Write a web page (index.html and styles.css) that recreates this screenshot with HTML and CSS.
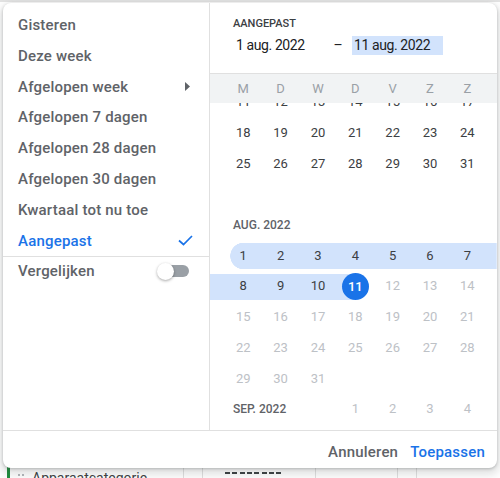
FILE: index.html
```html
<!DOCTYPE html>
<html lang="nl">

<head>
    <meta charset="UTF-8">
    <meta name="viewport" content="width=device-width, initial-scale=1.0">
    <title>Datumbereik</title>
    <link rel="stylesheet" href="styles.css">
</head>

<body>
    <!-- Pagina achter de popup -->
    <div class="page">
        <div class="page-top"></div>
        <div class="table-row">
            <div class="dim-cell">
                <span class="row-mark"></span>
                <svg class="drag" width="6" height="10" viewBox="0 0 6 10">
                    <circle cx="1" cy="2" r="1" fill="#9aa0a6" />
                    <circle cx="5" cy="2" r="1" fill="#9aa0a6" />
                    <circle cx="1" cy="6" r="1" fill="#9aa0a6" />
                    <circle cx="5" cy="6" r="1" fill="#9aa0a6" />
                </svg>
                <span class="dim-name">Apparaatcategorie</span>
            </div>
            <div class="cell cell-a"></div>
            <div class="cell cell-b"><span class="dashes"></span></div>
            <div class="cell cell-c"></div>
            <div class="cell cell-d"></div>
            <div class="cell cell-e"></div>
        </div>
    </div>

    <!-- Datumkiezer -->
    <div class="picker">
        <ul class="presets">
            <li class="preset">Gisteren</li>
            <li class="preset">Deze week</li>
            <li class="preset">Afgelopen week
                <svg class="arrow" width="5" height="9" viewBox="0 0 5 9">
                    <path d="M0 0 L5 4.5 L0 9 Z" fill="#5f6368" />
                </svg>
            </li>
            <li class="preset">Afgelopen 7 dagen</li>
            <li class="preset">Afgelopen 28 dagen</li>
            <li class="preset">Afgelopen 30 dagen</li>
            <li class="preset">Kwartaal tot nu toe</li>
            <li class="preset active">Aangepast
                <svg class="check" width="15" height="11" viewBox="0 0 15 11">
                    <path d="M1 5.5 L5.5 9.5 L14 1" fill="none" stroke="#1a73e8" stroke-width="1.7" />
                </svg>
            </li>
            <li class="preset compare">Vergelijken
                <span class="switch"><span class="thumb"></span></span>
            </li>
        </ul>

        <div class="calendar">
            <div class="cal-head">
                <div class="cal-title">AANGEPAST</div>
                <div class="range-inputs">
                    <span class="date-field">1 aug. 2022</span>
                    <span class="range-sep">–</span>
                    <span class="date-field focused">11 aug. 2022</span>
                </div>
            </div>

            <div class="weekdays">
                <span>M</span><span>D</span><span>W</span><span>D</span><span>V</span><span>Z</span><span>Z</span>
            </div>

            <div class="months">
                <div class="months-inner">
                    <div class="week">
                        <span>11</span><span>12</span><span>13</span><span>14</span><span>15</span><span>16</span><span>17</span>
                    </div>
                    <div class="week">
                        <span>18</span><span>19</span><span>20</span><span>21</span><span>22</span><span>23</span><span>24</span>
                    </div>
                    <div class="week">
                        <span>25</span><span>26</span><span>27</span><span>28</span><span>29</span><span>30</span><span>31</span>
                    </div>
                    <div class="week-gap"></div>

                    <div class="month-label">AUG. 2022</div>
                    <div class="week range-start">
                        <span class="start">1</span><span>2</span><span>3</span><span>4</span><span>5</span><span>6</span><span>7</span>
                    </div>
                    <div class="week range-end">
                        <span>8</span><span>9</span><span>10</span><span class="end"><b>11</b></span><span class="off">12</span><span class="off">13</span><span class="off">14</span>
                    </div>
                    <div class="week off">
                        <span>15</span><span>16</span><span>17</span><span>18</span><span>19</span><span>20</span><span>21</span>
                    </div>
                    <div class="week off">
                        <span>22</span><span>23</span><span>24</span><span>25</span><span>26</span><span>27</span><span>28</span>
                    </div>
                    <div class="week off">
                        <span>29</span><span>30</span><span>31</span>
                    </div>
                    <div class="week off">
                        <span class="month-inline">SEP. 2022</span><span>1</span><span>2</span><span>3</span><span>4</span>
                    </div>
                </div>
            </div>
        </div>

        <div class="actions">
            <span class="btn">Annuleren</span>
            <span class="btn primary">Toepassen</span>
        </div>
    </div>
</body>

</html>
```

FILE: styles.css
```css
body {
    margin: 0;
    font-family: Roboto, "Liberation Sans", Arial, sans-serif;
    background-color: #fff;
    overflow: hidden;
}

/* pagina achter de popup */
.page {
    height: 490px;
    display: flex;
    flex-direction: column;
    justify-content: space-between;
}

.page-top {
    height: 2px;
    background-color: #e3e3e3;
}

.table-row {
    height: 25px;
    display: flex;
    font-size: 14px;
    line-height: 20px;
    color: #3c4043;
}

.dim-cell {
    width: 183px;
    display: flex;
    align-items: center;
    align-self: stretch;
}

.row-mark {
    width: 3px;
    align-self: stretch;
    margin-left: 7px;
    background-color: #1e8e3e;
}

.drag {
    margin-left: 8px;
}

.dim-name {
    margin-left: 8px;
}

.cell {
    border-left: 1px solid #e0e0e0;
}

.cell-a {
    width: 18px;
}

.cell-b {
    width: 112px;
}

.cell-c {
    width: 81px;
}

.cell-d {
    width: 18px;
}

.cell-e {
    flex: 1;
}

.dashes {
    display: block;
    width: 57px;
    height: 2px;
    margin: 7px 0 0 22px;
    background: repeating-linear-gradient(90deg, #3c4043 0 5px, transparent 5px 7.3px);
}

/* popup */
.picker {
    position: absolute;
    top: 3px;
    left: 3px;
    width: 494px;
    height: 465px;
    background-color: #fff;
    border-radius: 8px;
    box-shadow: 0 1px 3px rgba(60, 64, 67, 0.3), 0 4px 8px 3px rgba(60, 64, 67, 0.15);
    display: grid;
    grid-template-columns: 206px 1fr;
    grid-template-rows: 427px 1fr;
    overflow: hidden;
}

.presets {
    list-style: none;
    margin: 0;
    padding: 6.6px 0 0;
}

.preset {
    height: 30.8px;
    display: flex;
    align-items: center;
    justify-content: space-between;
    padding: 0 16px 0 15px;
    font-size: 15px;
    font-weight: 500;
    letter-spacing: 0.2px;
    color: #5f6368;
}

.preset.active {
    color: #1a73e8;
}

.preset.compare {
    height: 29px;
    border-top: 1px solid #e0e0e0;
}

.arrow {
    margin-right: 3px;
}

.switch {
    width: 30px;
    height: 12px;
    margin-right: 4px;
    border-radius: 6px;
    background-color: #9aa0a6;
    display: flex;
    align-items: center;
}

.thumb {
    width: 17px;
    height: 17px;
    margin-left: -2px;
    border-radius: 50%;
    background-color: #fff;
    box-shadow: 0 1px 3px rgba(0, 0, 0, 0.35);
}

.calendar {
    border-left: 1px solid #e0e0e0;
    display: flex;
    flex-direction: column;
    min-height: 0;
}

.cal-head {
    height: 70px;
    box-sizing: border-box;
    padding: 13px 0 0 23px;
}

.cal-title {
    font-size: 11px;
    font-weight: 500;
    line-height: 16px;
    color: #3c4043;
}

.range-inputs {
    display: grid;
    grid-template-columns: 91px 28px 91px;
    margin-top: 4px;
    font-size: 14px;
    line-height: 19px;
    letter-spacing: -0.4px;
    color: #202124;
}

.date-field {
    padding-left: 3px;
}

.date-field.focused {
    padding-left: 2px;
    background-color: #d2e3fc;
}

.range-sep {
    text-align: center;
}

.weekdays {
    position: relative;
    z-index: 1;
    height: 29px;
    display: grid;
    grid-template-columns: repeat(7, 37.35px);
    align-items: center;
    padding-left: 14.6px;
    border-top: 1px solid #e0e0e0;
    background-color: #f1f3f4;
    font-size: 13px;
    color: #9aa0a6;
    text-align: center;
}

.months {
    flex: 1;
    overflow: hidden;
}

.months-inner {
    margin-top: -15.7px;
}

.week {
    height: 30.7px;
    display: grid;
    grid-template-columns: repeat(7, 37.35px);
    align-items: center;
    padding: 0 11px 0 14.6px;
    font-size: 13px;
    color: #3c4043;
    text-align: center;
}

.week > span {
    height: 30.7px;
    line-height: 30.7px;
}

.week-gap {
    height: 30.7px;
}

.month-label {
    height: 30.7px;
    line-height: 30.7px;
    padding-left: 23px;
    font-size: 12px;
    font-weight: 500;
    color: #5f6368;
}

.week .month-inline {
    grid-column: span 3;
    padding-left: 8.4px;
    text-align: left;
    font-size: 12px;
    font-weight: 500;
    color: #5f6368;
}

.off,
.week.off {
    color: #bdc1c6;
}

/* geselecteerd bereik */
.range-start {
    background: linear-gradient(#d2e3fc, #d2e3fc) right center / calc(100% - 33.3px) 26px no-repeat;
}

.range-end {
    background: linear-gradient(#d2e3fc, #d2e3fc) left center / 145.4px 26px no-repeat;
}

.week .start {
    background: radial-gradient(circle, #d2e3fc 13px, transparent 13.5px);
}

.week .end {
    display: flex;
    align-items: center;
    justify-content: center;
}

.end b {
    width: 27px;
    height: 27px;
    line-height: 27px;
    border-radius: 50%;
    background-color: #1a73e8;
    color: #fff;
    font-weight: 500;
}

.actions {
    grid-column: 1 / -1;
    border-top: 1px solid #e0e0e0;
    display: flex;
    justify-content: flex-end;
    gap: 12px;
    padding: 11px 12px 0;
    font-size: 15px;
    font-weight: 500;
    letter-spacing: 0.2px;
    line-height: 20px;
}

.btn {
    color: #5f6368;
}

.btn.primary {
    color: #1a73e8;
}
```
